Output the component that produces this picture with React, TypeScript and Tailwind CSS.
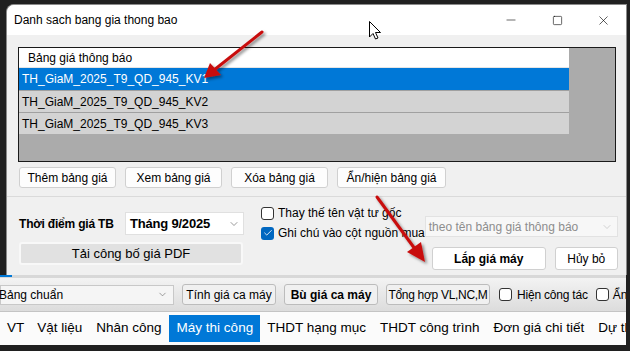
import { ChevronDown, Check, Minus, Square, X } from 'lucide-react'

const rows = ['TH_GiaM_2025_T9_QD_945_KV1', 'TH_GiaM_2025_T9_QD_945_KV2', 'TH_GiaM_2025_T9_QD_945_KV3']
const tabs = ['VT', 'Vật liệu', 'Nhân công', 'Máy thi công', 'THDT hạng mục', 'THDT công trình', 'Đơn giá chi tiết', 'Dự thầu']

function WinButton({ label, className = '', bold = false }: { label: string; className?: string; bold?: boolean }) {
  return (
    <button
      type="button"
      className={`flex h-[21px] shrink-0 items-center justify-center whitespace-nowrap rounded-[3px] border border-[#d0d0d0] bg-[#fdfdfd] text-[12px] text-black ${bold ? 'font-bold' : ''} ${className}`}
    >
      {label}
    </button>
  )
}

function Box({ checked = false }: { checked?: boolean }) {
  if (checked) {
    return (
      <span className="flex h-[13px] w-[13px] shrink-0 items-center justify-center rounded-[3px] bg-[#0067c0]">
        <Check size={10} strokeWidth={2} className="text-white" />
      </span>
    )
  }
  return <span className="h-[13px] w-[13px] shrink-0 rounded-[3px] border border-[#333] bg-white" />
}

function Arrows() {
  return (
    <svg className="pointer-events-none absolute left-0 top-0" width="630" height="351">
      <defs>
        <filter id="sh" x="-20%" y="-20%" width="140%" height="140%">
          <feDropShadow dx="2" dy="2" stdDeviation="1.5" floodColor="#000" floodOpacity="0.45" />
        </filter>
      </defs>
      <g filter="url(#sh)" fill="#c8100f" stroke="#c8100f">
        <line x1="262" y1="32" x2="214" y2="70" strokeWidth="3" strokeLinecap="round" />
        <polygon points="204,78 210,63 221,75" stroke="none" />
        <line x1="377" y1="197" x2="415" y2="249" strokeWidth="3" strokeLinecap="round" />
        <polygon points="425,262 407,252 421,242" stroke="none" />
      </g>
      <path
        d="M369.5 21.5 L369.5 37 L373 33.5 L375.5 39 L378 38 L375.5 32.5 L380.5 32.5 Z"
        fill="#fff"
        stroke="#000"
        strokeWidth="1"
        strokeLinejoin="round"
      />
    </svg>
  )
}

export default function App() {
  return (
    <div className="relative h-[351px] w-[630px] overflow-hidden whitespace-nowrap bg-[#202020] font-['Liberation_Sans',Arial,sans-serif] text-black">
      <div className="flex h-[275px] pt-[4px]">
        <div className="w-[6px] shrink-0" />
        <div className="flex w-[621px] flex-col overflow-hidden rounded-tl-[8px] border border-b-0 border-[#8a8a8a] bg-[#f0f0f0]">
          {/* title bar */}
          <div className="flex h-[30px] shrink-0 items-center bg-white pl-[7px]">
            <span className="text-[12px]">Danh sach bang gia thong bao</span>
            <div className="ml-auto flex h-full items-center">
              <div className="flex w-[46px] justify-center">
                <Minus size={14} strokeWidth={1} />
              </div>
              <div className="flex w-[46px] justify-center">
                <Square size={11} strokeWidth={1.3} />
              </div>
              <div className="flex w-[46px] justify-center">
                <X size={15} strokeWidth={1} />
              </div>
            </div>
          </div>

          {/* list panel */}
          <div className="shrink-0 px-[11px] pt-[12px]">
            <div className="h-[115px] w-[598px] border border-[#1a1a1a] bg-[#ababab]">
              <div className="w-[550px]">
                <div className="flex h-[20px] items-center border-b border-[#e5e5e5] bg-white pl-[9px] text-[12px]">
                  Bảng giá thông báo
                </div>
                {rows.map((r, i) => (
                  <div
                    key={r}
                    className={`flex h-[22px] items-center pl-[3px] text-[12px] ${
                      i === 0 ? 'bg-[#0078d7] text-white' : 'border-t border-[#a0a0a0] bg-[#d3d3d3]'
                    }`}
                  >
                    {r}
                  </div>
                ))}
              </div>
            </div>
          </div>

          {/* buttons row */}
          <div className="flex shrink-0 gap-[9px] pl-[12px] pt-[5px]">
            <WinButton label="Thêm bảng giá" className="w-[97px]" />
            <WinButton label="Xem bảng giá" className="w-[97px]" />
            <WinButton label="Xóa bảng giá" className="w-[97px]" />
            <WinButton label="Ẩn/hiện bảng giá" className="w-[109px]" />
          </div>

          {/* lower section */}
          <div className="mt-[8px] flex flex-1 border-t border-[#dadada] bg-[#f0f0f0] pl-[12px] pt-[7px]">
            <div className="flex w-[224px] shrink-0 flex-col">
              <div className="mt-[8px] flex items-center">
                <span className="w-[106px] shrink-0 text-[12px] font-bold tracking-[-0.2px]">Thời điểm giá TB</span>
                <div className="flex h-[23px] w-[119px] shrink-0 items-center justify-between border border-[#e0e0e0] bg-white pl-[4px] pr-[3px]">
                  <span className="text-[13px] font-bold tracking-[-0.2px]">Tháng 9/2025</span>
                  <ChevronDown size={12} strokeWidth={1.2} className="text-[#555]" />
                </div>
              </div>
              <div className="mt-[7px] flex h-[23px] w-[224px] items-center justify-center rounded-[3px] border-2 border-[#f8f8f8] bg-[#e1e1e1] text-[13px]">
                Tải công bố giá PDF
              </div>
            </div>

            <div className="ml-[18px] flex shrink-0 flex-col gap-[2px]">
              <div className="flex items-center gap-[4px] text-[12px]">
                <Box />
                Thay thế tên vật tư gốc
              </div>
              <div className="flex items-center gap-[4px] text-[12px]">
                <Box checked />
                Ghi chú vào cột nguồn mua
              </div>
            </div>

            <div className="ml-auto flex flex-col items-end pr-[11px] pt-[12px]">
              <div className="flex h-[21px] w-[193px] items-center justify-between border border-[#e2e2e2] bg-[#f7f7f7] pl-[3px] pr-[4px] text-[12px] text-[#8d8d8d]">
                theo tên bảng giá thông báo
                <ChevronDown size={12} strokeWidth={1} className="text-[#aaa]" />
              </div>
              <div className="mt-[10px] flex gap-[9px]">
                <WinButton label="Lắp giá máy" bold className="h-[23px] w-[114px] !bg-white" />
                <WinButton label="Hủy bỏ" className="h-[23px] w-[63px] !bg-white" />
              </div>
            </div>
          </div>
        </div>
      </div>

      {/* underlying app */}
      <div className="mr-[4px] overflow-hidden">
        <div className="flex h-[3px] bg-[#d8d8d8]">
          <div className="h-[2px] w-[12px] bg-[#0078d7]" />
        </div>
        <div className="flex h-[33px] items-center gap-[8px] bg-gradient-to-b from-[#f3f3f3] to-[#dcdcdc] text-[12px]">
          <div className="flex h-[20px] w-[174px] shrink-0 items-center justify-between border border-[#c8c8c8] bg-[#f5f5f5] pr-[5px]">
            <span className="-ml-[2px]">Bảng chuẩn</span>
            <ChevronDown size={11} strokeWidth={1.2} className="text-[#555]" />
          </div>
          <WinButton label="Tính giá ca máy" className="w-[94px] !border-[#bcbcbc] !bg-[#f0f0f0]" />
          <WinButton label="Bù giá ca máy" bold className="w-[94px] !border-[#bcbcbc] !bg-[#f0f0f0]" />
          <WinButton label="Tổng hợp VL,NC,M" className="w-[104px] !border-[#bcbcbc] !bg-[#f0f0f0] tracking-[-0.3px]" />
          <div className="ml-[1px] flex shrink-0 items-center gap-[5px] tracking-[-0.2px]">
            <Box />
            Hiện công tác
          </div>
          <div className="flex shrink-0 items-center gap-[4px]">
            <Box />
            Ẩn
          </div>
        </div>
        <div className="flex h-[34px] items-center overflow-hidden border-t border-[#c4c4c4] bg-[#fbfbfb] text-[13.5px]">
          <div className="flex h-[27px] shrink-0 items-stretch">
            {tabs.map((t) => (
              <div
                key={t}
                className={`flex shrink-0 items-center ${t === 'Máy thi công' ? 'bg-[#0078d7] pl-[8px] pr-[7px] text-white' : 'px-[7px]'} ${
                  t === 'VT' ? 'pr-[6px]' : ''
                }`}
              >
                {t}
              </div>
            ))}
          </div>
        </div>
      </div>
      <div className="h-[6px] bg-[#202020]" />

      <Arrows />
    </div>
  )
}
